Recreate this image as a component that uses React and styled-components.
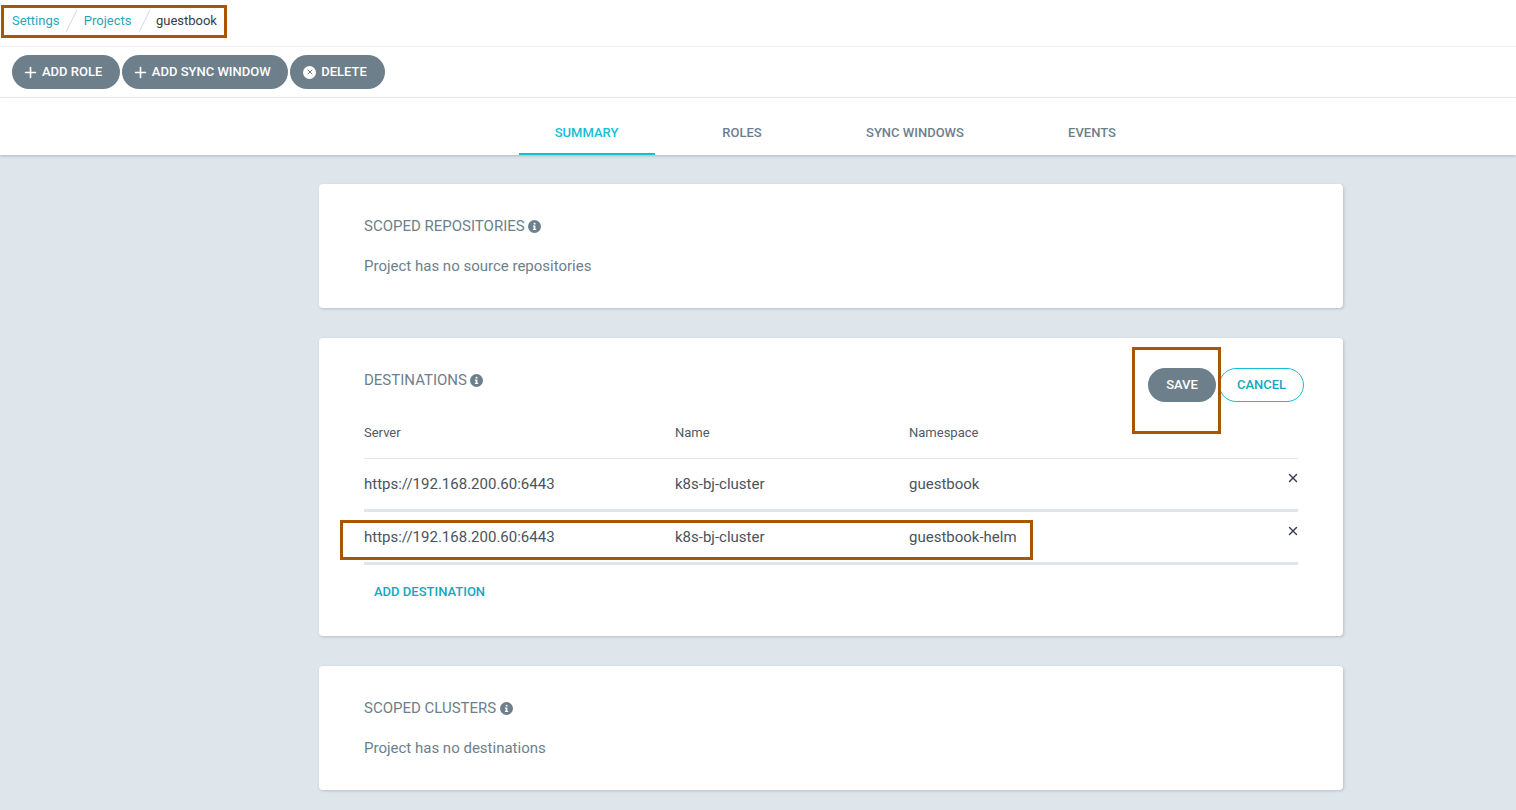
import React from "react";
import styled, { createGlobalStyle } from "styled-components";
import { Plus, X } from "lucide-react";

const GlobalStyle = createGlobalStyle`
  html, body {
    margin: 0;
    padding: 0;
    height: 100%;
    overflow: hidden;
    background: #dee6eb;
    font-family: Roboto, "Open Sans", sans-serif;
  }
`;

const Page = styled.div`
  position: relative;
  width: 1516px;
  height: 810px;
  overflow: hidden;
  background: #dee6eb;
`;

const TopBar = styled.div`
  height: 47px;
  display: flex;
  align-items: center;
  padding-left: 12px;
  padding-bottom: 5px;
  box-sizing: border-box;
  background: #fff;
  border-bottom: 1px solid #eff2f4;
  font-size: 13px;
`;

const Crumb = styled.span`
  color: ${(p) => (p.$current ? "#363c4a" : "#2ba5bd")};
`;

const Slash = styled.span`
  width: 1px;
  height: 24px;
  margin: 0 11.4px 0 12px;
  background: #d5dde3;
  transform: rotate(26deg);
`;

const Toolbar = styled.div`
  height: 51px;
  box-sizing: border-box;
  display: flex;
  align-items: flex-start;
  gap: 2px;
  padding: 8px 0 0 12px;
  background: #fff;
  border-bottom: 1px solid #eff2f4;
`;

const Pill = styled.button`
  height: 34px;
  display: inline-flex;
  align-items: center;
  justify-content: center;
  gap: 3px;
  box-sizing: border-box;
  padding: 0 17.5px 2px 10px;
  border: 0;
  border-radius: 17px;
  background: #6d7f8b;
  color: #fff;
  font-family: inherit;
  font-size: 13px;
  font-weight: 500;
  letter-spacing: 0;
`;

const PillIcon = styled.span`
  display: flex;
  margin-top: 2px;
`;

const DeleteButton = styled(Pill)`
  gap: 4px;
  padding: 0 18px 2px 13px;
`;

const SaveButton = styled(Pill)`
  width: 68px;
  padding: 0 0 2px;
`;

const CancelButton = styled(Pill)`
  width: 85px;
  padding: 0 0 2px;
  background: #fff;
  border: 1px solid #18bed4;
  color: #10a9bd;
`;

const DeleteDot = styled.span`
  width: 13px;
  height: 13px;
  border-radius: 50%;
  background: #fff;
  display: inline-flex;
  align-items: center;
  justify-content: center;
  color: #6d7f8b;
  margin: 2px 1px 0 0;
`;

const Tabs = styled.div`
  height: 57px;
  position: relative;
  z-index: 1;
  display: flex;
  padding-left: 519px;
  background: #fff;
  box-shadow: 0 1px 3px rgba(80, 100, 115, 0.35);
`;

const Tab = styled.div`
  width: ${(p) => p.$w}px;
  box-sizing: border-box;
  display: flex;
  align-items: center;
  justify-content: center;
  padding: 14px 1px 0 0;
  font-size: 13px;
  font-weight: 500;
  color: ${(p) => (p.$active ? "#18bed4" : "#6d7f8b")};
  border-bottom: 2px solid ${(p) => (p.$active ? "#18bed4" : "transparent")};
`;

const Content = styled.div`
  width: 1024px;
  margin-left: 319px;
  padding-top: 29px;
  display: flex;
  flex-direction: column;
  gap: 30px;
`;

const Card = styled.section`
  position: relative;
  box-sizing: border-box;
  min-height: 124px;
  padding: 33px 45px 0;
  background: #fff;
  border-radius: 4px;
  box-shadow: 1px 1px 3px rgba(80, 100, 115, 0.28);
`;

const CardTitle = styled.div`
  display: flex;
  align-items: center;
  gap: 3.4px;
  height: 18px;
  font-size: 15px;
  color: #6d7f8b;
`;

const InfoDot = styled.svg`
  width: 13px;
  height: 13px;
  flex: none;
`;

const Muted = styled.div`
  margin-top: 22px;
  font-size: 15px;
  line-height: 18px;
  color: #6d7f8b;
`;

const Actions = styled.div`
  position: absolute;
  top: 30px;
  left: 829px;
  display: flex;
  gap: 3px;
`;

const HeadRow = styled.div`
  display: grid;
  grid-template-columns: 311px 234px 1fr;
  margin-top: 35px;
  height: 34px;
  width: 934px;
  font-size: 13px;
  line-height: 18px;
  color: #4f5a66;
  border-bottom: 1px solid #e2e8ed;
`;

const Row = styled.div`
  position: relative;
  display: grid;
  grid-template-columns: 311px 234px 1fr;
  align-items: center;
  width: 934px;
  height: 53px;
  box-sizing: border-box;
  padding-bottom: 1px;
  font-size: 15px;
  color: #4a5360;
  border-bottom: 3px solid #dee6eb;
`;

const Remove = styled.span`
  position: absolute;
  right: -2px;
  top: 12px;
  display: flex;
  color: #363c4a;
`;

const AddLink = styled.div`
  margin: 19px 0 0 10px;
  padding-bottom: 36px;
  font-size: 13px;
  line-height: 16px;
  font-weight: 500;
  color: #10a9bd;
`;

const Callout = styled.div`
  position: absolute;
  box-sizing: border-box;
  left: ${(p) => p.$x}px;
  top: ${(p) => p.$y}px;
  width: ${(p) => p.$w}px;
  height: ${(p) => p.$h}px;
  border: 3px solid #a85600;
  z-index: 5;
  pointer-events: none;
`;

const Info = () => (
  <InfoDot viewBox="0 0 13 13">
    <circle cx="6.5" cy="6.5" r="6.5" fill="#6d7f8b" />
    <rect x="5.6" y="2.7" width="1.9" height="1.9" rx="0.6" fill="#fff" />
    <path d="M4.9 5.6h2.5v3.4h0.8v1H4.9V9h0.7V6.6h-0.7z" fill="#fff" />
  </InfoDot>
);

const destinations = [
  { server: "https://192.168.200.60:6443", name: "k8s-bj-cluster", ns: "guestbook" },
  { server: "https://192.168.200.60:6443", name: "k8s-bj-cluster", ns: "guestbook-helm" },
];

const tabs = [
  { label: "SUMMARY", w: 136, active: true },
  { label: "ROLES", w: 175 },
  { label: "SYNC WINDOWS", w: 171 },
  { label: "EVENTS", w: 183 },
];

export default function App() {
  return (
    <Page>
      <GlobalStyle />
      <TopBar>
        <Crumb>Settings</Crumb>
        <Slash />
        <Crumb>Projects</Crumb>
        <Slash />
        <Crumb $current>guestbook</Crumb>
      </TopBar>
      <Toolbar>
        <Pill>
          <PillIcon>
            <Plus size={17} strokeWidth={2.3} />
          </PillIcon>
          ADD ROLE
        </Pill>
        <Pill>
          <PillIcon>
            <Plus size={17} strokeWidth={2.3} />
          </PillIcon>
          ADD SYNC WINDOW
        </Pill>
        <DeleteButton>
          <DeleteDot>
            <X size={8} strokeWidth={3} />
          </DeleteDot>
          DELETE
        </DeleteButton>
      </Toolbar>
      <Tabs>
        {tabs.map((t) => (
          <Tab key={t.label} $w={t.w} $active={t.active}>
            {t.label}
          </Tab>
        ))}
      </Tabs>
      <Content>
        <Card>
          <CardTitle>
            SCOPED REPOSITORIES <Info />
          </CardTitle>
          <Muted>Project has no source repositories</Muted>
        </Card>
        <Card>
          <CardTitle>
            DESTINATIONS <Info />
          </CardTitle>
          <Actions>
            <SaveButton>SAVE</SaveButton>
            <CancelButton>CANCEL</CancelButton>
          </Actions>
          <HeadRow>
            <span>Server</span>
            <span>Name</span>
            <span>Namespace</span>
          </HeadRow>
          {destinations.map((d) => (
            <Row key={d.ns}>
              <span>{d.server}</span>
              <span>{d.name}</span>
              <span>{d.ns}</span>
              <Remove>
                <X size={14} strokeWidth={2.4} />
              </Remove>
            </Row>
          ))}
          <AddLink>ADD DESTINATION</AddLink>
        </Card>
        <Card>
          <CardTitle>
            SCOPED CLUSTERS <Info />
          </CardTitle>
          <Muted>Project has no destinations</Muted>
        </Card>
      </Content>
      <Callout $x={1} $y={5} $w={226} $h={33} />
      <Callout $x={1132} $y={347} $w={89} $h={87} />
      <Callout $x={340} $y={520} $w={693} $h={40} />
    </Page>
  );
}
